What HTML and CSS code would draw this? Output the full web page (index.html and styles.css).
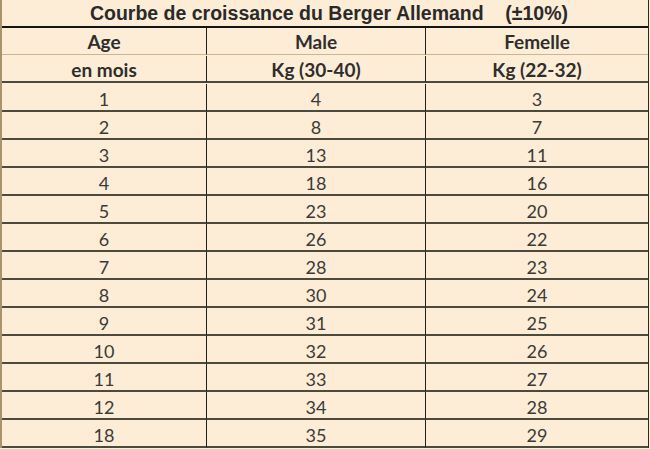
FILE: index.html
```html
<!DOCTYPE html>
<html lang="fr">
<head>
<meta charset="utf-8">
<link rel="stylesheet" href="styles.css">
</head>
<body>
<div class="sheet">
  <div class="title">Courbe de croissance du Berger Allemand&nbsp;&nbsp;&nbsp;&nbsp;(±10%)</div>
  <div class="grid">
    <div class="cell head top">Age</div>
    <div class="cell head top">Male</div>
    <div class="cell head top last">Femelle</div>
    <div class="cell head sub">en mois</div>
    <div class="cell head sub">Kg (30-40)</div>
    <div class="cell head sub last">Kg (22-32)</div>

    <div class="cell">1</div><div class="cell">4</div><div class="cell last">3</div>
    <div class="cell">2</div><div class="cell">8</div><div class="cell last">7</div>
    <div class="cell">3</div><div class="cell">13</div><div class="cell last">11</div>
    <div class="cell">4</div><div class="cell">18</div><div class="cell last">16</div>
    <div class="cell">5</div><div class="cell">23</div><div class="cell last">20</div>
    <div class="cell">6</div><div class="cell">26</div><div class="cell last">22</div>
    <div class="cell">7</div><div class="cell">28</div><div class="cell last">23</div>
    <div class="cell">8</div><div class="cell">30</div><div class="cell last">24</div>
    <div class="cell">9</div><div class="cell">31</div><div class="cell last">25</div>
    <div class="cell">10</div><div class="cell">32</div><div class="cell last">26</div>
    <div class="cell">11</div><div class="cell">33</div><div class="cell last">27</div>
    <div class="cell">12</div><div class="cell">34</div><div class="cell last">28</div>
    <div class="cell">18</div><div class="cell">35</div><div class="cell last">29</div>
  </div>
</div>
</body>
</html>
```
FILE: styles.css
```css
html, body {
  margin: 0;
  padding: 0;
  background: #fdedd6;
}
.sheet {
  width: 649px;
  box-sizing: border-box;
  border-left: 2px solid #a8946c;
  border-right: 1px solid #2b2b22;
  background: #fdedd6;
  font-family: Lato, "Liberation Sans", sans-serif;
  color: #3a3a3a;
}
.title {
  height: 28px;
  box-sizing: border-box;
  border-bottom: 2px solid #141414;
  font-family: "Liberation Sans", Arial, sans-serif;
  font-weight: bold;
  font-size: 19.5px;
  color: #2a2a2a;
  text-align: center;
  line-height: 26px;
  padding-left: 8px;
  white-space: nowrap;
}
.grid {
  display: grid;
  grid-template-columns: 205px 219px 1fr;
  grid-auto-rows: 28px;
}
.cell {
  box-sizing: border-box;
  border-right: 1px solid #1e1e1e;
  border-bottom: 2px solid #4b4a3c;
  display: flex;
  align-items: center;
  justify-content: center;
  font-size: 18px;
  padding-top: 3px;
}
.cell.last {
  border-right: none;
}
.head {
  font-weight: bold;
  font-size: 19px;
  color: #2e2e2e;
  padding-top: 1px;
}
.head.top {
  height: 27px;
  border-bottom: 1px solid #c9b794;
}
.head.sub {
  height: 27px;
}
```
